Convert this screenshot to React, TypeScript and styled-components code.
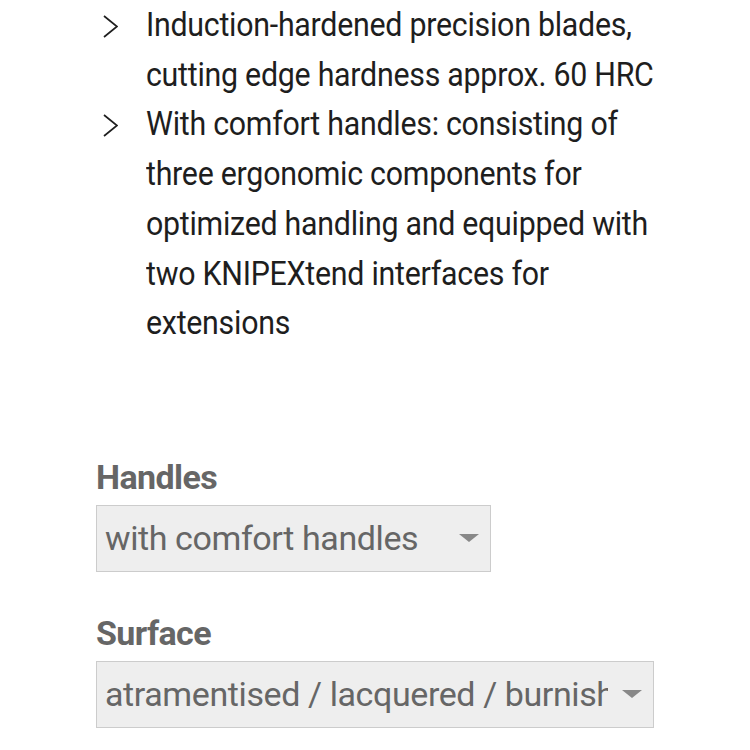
import React from 'react'
import styled, { createGlobalStyle } from 'styled-components'

const GlobalStyle = createGlobalStyle`
  html, body {
    margin: 0;
    padding: 0;
    background: #fff;
  }
  body {
    font-family: Roboto, "Liberation Sans", sans-serif;
  }
`

const features = [
  'Induction-hardened precision blades,\ncutting edge hardness approx. 60 HRC',
  'With comfort handles: consisting of\nthree ergonomic components for\noptimized handling and equipped with\ntwo KNIPEXtend interfaces for\nextensions',
]

const options = [
  { label: 'Handles', value: 'with comfort handles', width: 395 },
  { label: 'Surface', value: 'atramentised / lacquered / burnished', width: 558 },
]

const Page = styled.div`
  width: 750px;
  height: 750px;
  overflow: hidden;
  padding-left: 96px;
  box-sizing: border-box;
`

const FeatureList = styled.ul`
  list-style: none;
  margin: 0 0 109px;
  padding: 0;
`

const FeatureItem = styled.li`
  display: flex;
  gap: 28px;
  font-size: 34px;
  line-height: 49.7px;
  color: #1e1e1e;
`

const Chevron = styled.svg`
  flex: none;
  width: 22px;
  height: 24px;
  margin-top: 14px;
`

const FeatureText = styled.span`
  display: inline-block;
  white-space: pre;
  letter-spacing: -0.3px;
  transform: scaleX(0.893);
  transform-origin: left top;
`

const Group = styled.div`
  display: flex;
  flex-direction: column;
  margin-bottom: 41px;
`

const Label = styled.div`
  font-size: 34px;
  font-weight: 700;
  line-height: 40px;
  color: #666;
  letter-spacing: -0.6px;
  margin-bottom: 8px;
`

const Select = styled.div<{ width: number }>`
  display: flex;
  align-items: center;
  width: ${({ width }) => width}px;
  height: 67px;
  box-sizing: border-box;
  background: #eee;
  border: 1.5px solid #ccc;
  padding: 0 10px 0 8px;
  gap: 14px;
`

const SelectValue = styled.span`
  flex: 1;
  overflow: hidden;
  white-space: nowrap;
  font-size: 34px;
  color: #666;
  letter-spacing: -0.4px;
`

const Caret = styled.span`
  flex: none;
  width: 0;
  height: 0;
  border-left: 10px solid transparent;
  border-right: 10px solid transparent;
  border-top: 8px solid #888;
  margin-right: 1px;
`

const App = () => {
  return (
    <Page>
      <GlobalStyle />
      <FeatureList>
        {features.map((text) => (
          <FeatureItem key={text}>
            <Chevron viewBox="0 0 22 24">
              <polyline points="8,2 21,12.5 8,23" fill="none" stroke="#1e1e1e" strokeWidth="1.7" />
            </Chevron>
            <FeatureText>{text}</FeatureText>
          </FeatureItem>
        ))}
      </FeatureList>
      {options.map((opt) => (
        <Group key={opt.label}>
          <Label>{opt.label}</Label>
          <Select width={opt.width}>
            <SelectValue>{opt.value}</SelectValue>
            <Caret />
          </Select>
        </Group>
      ))}
    </Page>
  )
}

export default App
